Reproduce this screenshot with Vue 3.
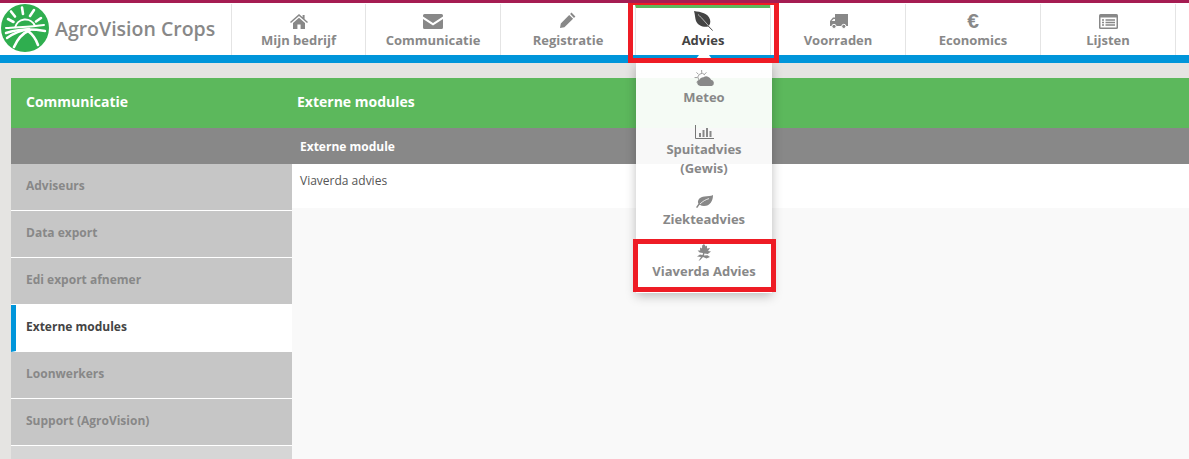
<script setup>
const navItems = [
  { label: 'Mijn bedrijf', icon: 'home' },
  { label: 'Communicatie', icon: 'mail' },
  { label: 'Registratie', icon: 'pencil' },
  { label: 'Advies', icon: 'leaf', active: true },
  { label: 'Voorraden', icon: 'truck' },
  { label: 'Economics', icon: 'euro' },
  { label: 'Lijsten', icon: 'list' },
]
const sideItems = [
  { label: 'Adviseurs' },
  { label: 'Data export' },
  { label: 'Edi export afnemer' },
  { label: 'Externe modules', active: true },
  { label: 'Loonwerkers' },
  { label: 'Support (AgroVision)' },
]
</script>

<template>
  <div class="page">
    <header class="topbar">
      <div class="brand">
        <svg class="logo" viewBox="0 0 48 48" width="48" height="48">
          <circle cx="24" cy="24" r="24" fill="#2fae4f" />
          <g stroke="#fff" stroke-width="2.6" stroke-linecap="round" fill="none">
            <path d="M21 3.5 L22 10" />
            <path d="M10 7.5 L14 12.5" />
            <path d="M33 6 L29 12" />
            <path d="M7 15 L12.5 18" />
            <path d="M40 14 L35 17.5" />
          </g>
          <path d="M14 24 A10.5 10.5 0 0 1 34 22" stroke="#fff" stroke-width="2" fill="none" />
          <g stroke="#fff" fill="none" stroke-linecap="round">
            <path d="M5 24 C16 23 30 23 43 21" stroke-width="2" />
            <path d="M5 29 C14 26 26 24 44 27" stroke-width="2.4" />
            <path d="M6 34 C13 29 21 26 28 25" stroke-width="2.4" />
            <path d="M13 43 C16 36 22 29 29 26" stroke-width="2.6" />
            <path d="M37 41 C35 35 31 30 27 27" stroke-width="2.6" />
          </g>
        </svg>
        <span class="brand-name">AgroVision Crops</span>
      </div>
      <nav class="nav">
        <a v-for="item in navItems" :key="item.label" class="nav-item" :class="{ active: item.active }">
          <span class="nav-icon">
            <svg v-if="item.icon === 'home'" width="18" height="15" viewBox="0 0 18 15">
              <path fill="#888" d="M9 0 L12.6 3.2 V1 H14.6 V5 L18 8 L17 9 L9 2 L1 9 L0 8 Z M3 9 L9 3.8 L15 9 V15 H10.6 V10.6 H7.4 V15 H3 Z" />
            </svg>
            <svg v-else-if="item.icon === 'mail'" width="20" height="15" viewBox="0 0 20 15">
              <path fill="#888" d="M1.5 0 H18.5 A1.5 1.5 0 0 1 20 1.5 V2.6 L10 9 L0 2.6 V1.5 A1.5 1.5 0 0 1 1.5 0 Z M0 5 L10 11.4 L20 5 V13.5 A1.5 1.5 0 0 1 18.5 15 H1.5 A1.5 1.5 0 0 1 0 13.5 Z" />
            </svg>
            <svg v-else-if="item.icon === 'pencil'" class="pencil" width="16" height="16" viewBox="0 0 16 16">
              <path fill="#888" d="M11.5 0.6 L15.4 4.5 L14 5.9 L10.1 2 Z M9.2 2.9 L13.1 6.8 L4.4 15.2 L0 16 L0.8 11.6 Z" />
            </svg>
            <svg v-else-if="item.icon === 'leaf'" width="20" height="20" viewBox="0 0 20 20">
              <path fill="#444" d="M1 0 C8 1 15 2 17 8.5 C17.9 11.5 16.8 14.3 15 15.6 C10 16.5 4.8 14.5 3 10 C2 7.2 2 3 1 0 Z" />
              <path d="M5 3.5 C9 7 13 12 19.6 19.4" stroke="#bbb" stroke-width="1" fill="none" />
              <path d="M15 15 L19.6 19.6" stroke="#666" stroke-width="1" fill="none" />
            </svg>
            <svg v-else-if="item.icon === 'truck'" width="19" height="15" viewBox="0 0 19 15">
              <path fill="#888" d="M6 0 H19 V12 H1 V7 L4 3.5 H6 Z" />
              <path fill="#fff" d="M2.6 7 L4.6 5 H6 V7 Z" />
              <circle cx="5" cy="12.4" r="2.1" fill="#888" stroke="#fff" stroke-width="1" />
              <circle cx="14.8" cy="12.4" r="2.1" fill="#888" stroke="#fff" stroke-width="1" />
            </svg>
            <span v-else-if="item.icon === 'euro'" class="euro">€</span>
            <svg v-else-if="item.icon === 'list'" width="19" height="15" viewBox="0 0 19 15">
              <rect x="0" y="0" width="19" height="15" rx="1.5" fill="#888" />
              <rect x="1.5" y="3.5" width="16" height="10" fill="#fff" />
              <path d="M3 6 H5 M6.5 6 H16 M3 8.5 H5 M6.5 8.5 H16 M3 11 H5 M6.5 11 H16" stroke="#888" stroke-width="1.4" />
            </svg>
          </span>
          <span class="nav-label">{{ item.label }}</span>
        </a>
        <span class="nav-end"></span>
      </nav>
    </header>
    <div class="blue-bar"></div>

    <main class="content">
      <div class="green-row">
        <div class="green-left">Communicatie</div>
        <div class="green-right">Externe modules</div>
      </div>
      <div class="columns">
        <aside class="sidebar">
          <div class="side-head"></div>
          <a v-for="item in sideItems" :key="item.label" class="side-item" :class="{ active: item.active }">{{ item.label }}</a>
          <div class="side-rest"></div>
        </aside>
        <section class="panel">
          <div class="panel-head">Externe module</div>
          <div class="panel-row">Viaverda advies</div>
        </section>
      </div>
    </main>

    <div class="notch"></div>
    <div class="dropdown">
      <a class="drop-item">
        <span class="drop-icon">
          <svg width="21" height="17" viewBox="0 0 22 18">
            <g stroke="#999" stroke-width="1" fill="none">
              <path d="M8 0 V3 M2.5 2.5 L4.6 4.6 M0.5 8 H3.5 M13 2.5 L11 4.6 M2.5 13 L4.2 11.5" />
              <path d="M5 10.5 A4 4 0 0 1 11.5 5.2" />
            </g>
            <path fill="#888" d="M6.5 17 A3.5 3.5 0 0 1 5.6 10.2 A4.2 4.2 0 0 1 10 7.6 A5.4 5.4 0 0 1 18 10.4 A3.4 3.4 0 0 1 18.6 17 Z" />
          </svg>
        </span>
        <span class="drop-label">Meteo</span>
      </a>
      <a class="drop-item">
        <span class="drop-icon">
          <svg width="19" height="14" viewBox="0 0 19 14">
            <path d="M0.5 0 V13.5 H19" stroke="#777" stroke-width="1" fill="none" />
            <path d="M4 8 H6 V12 H4 Z M7.5 5 H9.5 V12 H7.5 Z M11 3 H13 V12 H11 Z M14.5 6 H16.5 V12 H14.5 Z" fill="#888" />
          </svg>
        </span>
        <span class="drop-label">Spuitadvies<br />(Gewis)</span>
      </a>
      <a class="drop-item">
        <span class="drop-icon">
          <svg class="sick-leaf" width="17" height="13" viewBox="0 0 17 13">
            <path fill="#888" d="M17 0 C17 6 14 11 8 11 C6.4 11 5 10.6 3.6 9.8 L1.2 13 L0 12.2 L2.4 8.8 C0.8 5 4 1.6 8.5 1.4 C11.5 1.2 15 1.2 17 0 Z" />
            <path d="M4 9 C7 6 10 4.5 13 3.6" stroke="#fff" stroke-width="0.8" fill="none" />
          </svg>
        </span>
        <span class="drop-label">Ziekteadvies</span>
      </a>
      <a class="drop-item">
        <span class="drop-icon">
          <svg width="14" height="17" viewBox="0 0 14 17">
            <path fill="#888" d="M7 0 L8.8 2.4 L10 1.4 L10 4.6 L13 4 L11 7 L14 7.6 L10.8 10 L7.4 9.4 L7 11.5 L10.5 11.2 L13 13 L9.5 14.4 L6 13 L3.2 16 L1.5 17 L4 13 L0 12.4 L3 10.6 L5.6 11 L6 9 L2.6 8.6 L0.6 6.6 L3.2 6.4 L3 3.6 L5 4.6 L5.2 1.6 Z" />
          </svg>
        </span>
        <span class="drop-label">Viaverda Advies</span>
      </a>
    </div>

    <div class="mark mark-nav"></div>
    <div class="mark mark-item"></div>
  </div>
</template>

<style>
html, body { margin: 0; background: #f9f9f9; }
</style>

<style scoped>
.page {
  position: relative;
  width: 1189px;
  height: 459px;
  overflow: hidden;
  background: #e5e4e2;
  font-family: "Open Sans", "Noto Sans", sans-serif;
  border-top: 3px solid #a51c52;
  box-sizing: border-box;
}
.topbar {
  display: flex;
  height: 52px;
  background: #fff;
}
.brand {
  display: flex;
  align-items: center;
  width: 231px;
  flex: none;
  padding-left: 1px;
  box-sizing: border-box;
  gap: 6px;
}
.logo { flex: none; margin-top: -2px; }
.brand-name {
  font-size: 19.5px;
  font-weight: 600;
  color: #888;
  white-space: nowrap;
  margin-top: -2px;
}
.nav { display: flex; flex: 1; }
.nav-item {
  width: 135px;
  flex: none;
  box-sizing: border-box;
  display: flex;
  flex-direction: column;
  align-items: center;
  border-left: 1px solid #e4e4e4;
  margin-top: 1px;
  color: #888;
}
.nav-item:first-child { width: 134px; }
.nav-item.active {
  color: #444;
  border-top: 3px solid #5cb85c;
  margin-top: 2px;
}
.nav-end { flex: 1; border-left: 1px solid #e4e4e4; margin-top: 1px; }
.nav-icon {
  height: 25px;
  display: flex;
  align-items: flex-end;
  justify-content: center;
  flex: none;
}
.pencil { margin-bottom: 1px; }
.nav-item.active .nav-icon { height: 23px; }
.nav-item.active .nav-label { margin-top: -2px; }
.euro {
  font-family: "Liberation Sans", sans-serif;
  font-size: 21px;
  font-weight: 700;
  line-height: 22px;
  color: #888;
  margin-bottom: -3px;
}
.nav-label {
  font-size: 13px;
  font-weight: 700;
  line-height: 22px;
  white-space: nowrap;
}
.blue-bar { height: 8px; background: #0095da; }

.content {
  padding: 15px 0 0 11px;
}
.green-row {
  display: flex;
  height: 50px;
  box-sizing: border-box;
  padding-bottom: 3px;
  align-items: center;
  background: #5cb85c;
  color: #fff;
  font-size: 14px;
  font-weight: 700;
}
.green-left { width: 286px; padding-left: 15px; box-sizing: border-box; }
.columns { display: flex; height: 331px; background: #f9f9f9; }
.sidebar { width: 281px; flex: none; display: flex; flex-direction: column; }
.side-head { height: 36px; background: #888; flex: none; }
.side-item {
  height: 46px;
  flex: none;
  border-bottom: 1px solid #fff;
  background: #c6c6c6;
  color: #888;
  font-size: 12px;
  font-weight: 700;
  line-height: 43px;
  padding-left: 15px;
}
.side-item.active {
  background: #fff;
  color: #444;
  border-left: 5px solid #0095da;
  padding-left: 10px;
}
.side-rest { flex: 1; background: #d6d6d6; }
.panel { flex: 1; }
.panel-head {
  height: 36px;
  line-height: 38px;
  background: #888;
  color: #fff;
  font-size: 12px;
  font-weight: 700;
  padding-left: 8px;
}
.panel-row {
  height: 44px;
  background: #fff;
  color: #555;
  font-size: 12px;
  line-height: 34px;
  padding-left: 8px;
}

.notch {
  position: absolute;
  left: 696px;
  top: 52px;
  width: 16px;
  height: 4px;
  background: #fff;
  clip-path: polygon(3px 0, 13px 0, 16px 4px, 0 4px);
}
.dropdown {
  position: absolute;
  left: 636px;
  top: 60px;
  width: 136px;
  height: 230px;
  box-sizing: border-box;
  padding-top: 5px;
  background: rgba(255, 255, 255, 0.94);
  box-shadow: 0 3px 10px rgba(0, 0, 0, 0.25);
  display: flex;
  flex-direction: column;
  gap: 12px;
}
.drop-item {
  display: flex;
  flex-direction: column;
  align-items: center;
  color: #888;
}
.drop-item:nth-child(even) { margin-top: 1px; }
.drop-icon {
  height: 20px;
  box-sizing: border-box;
  padding-bottom: 1px;
  display: flex;
  align-items: flex-end;
  justify-content: center;
}
.sick-leaf { margin-bottom: 1px; }
.drop-label {
  font-size: 13px;
  font-weight: 700;
  line-height: 19px;
  text-align: center;
  white-space: nowrap;
}
.mark {
  position: absolute;
  box-sizing: border-box;
  border: 5px solid #ee1c25;
  pointer-events: none;
}
.mark-nav { left: 628px; top: -3px; width: 151px; height: 63px; }
.mark-item { left: 633px; top: 236px; width: 143px; height: 53px; }
</style>
